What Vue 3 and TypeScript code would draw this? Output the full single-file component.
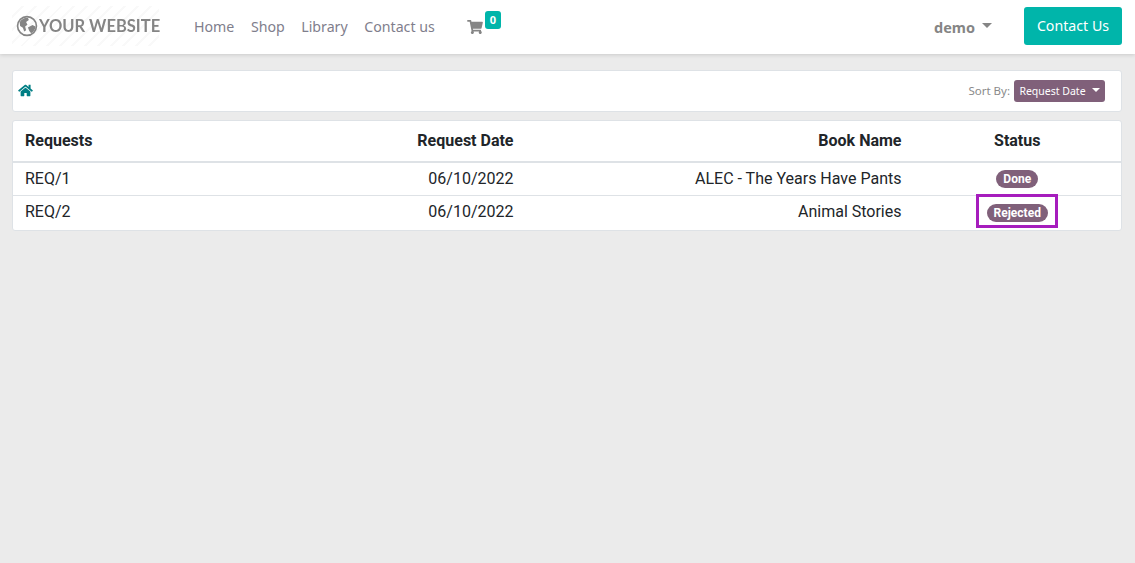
<script setup lang="ts">
interface Row { req: string; date: string; book: string; status: string; marked?: boolean }
const navItems: string[] = ['Home', 'Shop', 'Library', 'Contact us']
const rows: Row[] = [
  { req: 'REQ/1', date: '06/10/2022', book: 'ALEC - The Years Have Pants', status: 'Done' },
  { req: 'REQ/2', date: '06/10/2022', book: 'Animal Stories', status: 'Rejected', marked: true },
]
</script>

<template>
  <div class="page">
    <header class="topbar">
      <div class="logo">
        <svg class="globe" viewBox="0 0 24 24" width="22" height="22">
          <circle cx="12" cy="12" r="10.300" fill="none" stroke="#858585" stroke-width="1.800" />
          <path fill="#858585" d="M4 8c2-4 6-5.500 9-5l1 2.500-3 2 1.500 3-2.500 2 1 4-2 1.500-1.500-4-3-2zM13 13.500l5-2.500 3.200 1.500c0 3-1.700 5.500-4.700 7.500l-2-2.500z" />
        </svg>
        <span class="logo-text">YOUR WEBSITE</span>
      </div>
      <nav class="nav">
        <a v-for="item in navItems" :key="item" class="nav-link">{{ item }}</a>
      </nav>
      <div class="cart">
        <svg viewBox="0 0 576 512" width="16" height="14">
          <path fill="#858585" d="M528 301l47-208c3-15-8-29-23-29H159l-9-45C148 8 138 0 127 0H24C11 0 0 11 0 24v16c0 13 11 24 24 24h70l70 343c-17 10-28 28-28 49 0 31 25 56 56 56s56-25 56-56c0-16-6-30-17-40h210c-11 10-17 24-17 40 0 31 25 56 56 56s56-25 56-56c0-22-13-41-32-50l6-24c3-15-8-29-23-29H218l-6-32h293c11 0 21-8 23-19z" />
        </svg>
        <span class="cart-badge">0</span>
      </div>
      <div class="spacer"></div>
      <div class="user">demo<span class="caret user-caret"></span></div>
      <button class="contact-btn" type="button">Contact Us</button>
    </header>

    <main class="content">
      <section class="card toolbar">
        <svg class="home" viewBox="0 0 576 512" width="15" height="13">
          <path fill="#017e84" d="M280 148 96 300v164c0 9 7 16 16 16l112-1c9 0 16-7 16-16v-95c0-9 7-16 16-16h64c9 0 16 7 16 16v95c0 9 7 16 16 16l112 1c9 0 16-7 16-16V300L296 148c-5-4-11-4-16 0zM572 251l-84-69V44c0-7-5-12-12-12h-56c-7 0-12 5-12 12v72l-89-74c-18-14-44-14-62 0L4 251c-5 4-6 12-2 17l26 31c4 5 12 6 17 2L280 107c5-4 11-4 16 0l235 194c5 4 13 3 17-2l26-31c4-5 3-13-2-17z" />
        </svg>
        <div class="sort">
          <span class="sort-label">Sort By:</span>
          <button class="sort-btn" type="button">Request Date<span class="caret sort-caret"></span></button>
        </div>
      </section>

      <section class="card table-card">
        <table class="table">
          <colgroup>
            <col class="c1" /><col class="c2" /><col class="c3" /><col class="c4" />
          </colgroup>
          <thead>
            <tr>
              <th class="left">Requests</th>
              <th class="right">Request Date</th>
              <th class="right">Book Name</th>
              <th class="center">Status</th>
            </tr>
          </thead>
          <tbody>
            <tr v-for="row in rows" :key="row.req">
              <td class="left">{{ row.req }}</td>
              <td class="right">{{ row.date }}</td>
              <td class="right">{{ row.book }}</td>
              <td class="center status-cell">
                <span class="pill">{{ row.status }}</span>
                <span v-if="row.marked" class="highlight"></span>
              </td>
            </tr>
          </tbody>
        </table>
      </section>
    </main>
  </div>
</template>

<style scoped>
.page {
  width: 1135px;
  height: 563px;
  background: #ebebeb;
  overflow: hidden;
  font-family: Roboto, sans-serif;
  color: #212529;
}
.topbar {
  height: 54px;
  background: #fff;
  box-shadow: 0 1px 4px rgba(0, 0, 0, 0.14);
  display: flex;
  align-items: center;
  padding: 0 13px 0 15px;
  box-sizing: border-box;
  font-family: "Noto Sans", sans-serif;
}
.logo {
  width: 147px;
  height: 40px;
  margin-left: -3px;
  margin-top: -3px;
  padding-left: 4px;
  box-sizing: border-box;
  display: flex;
  align-items: center;
  background: repeating-linear-gradient(135deg, #fff 0 7px, #f9f9f9 7px 9px);
}
.globe {
  flex: none;
  filter: blur(0.3px);
}
.logo-text {
  font-family: Lato, sans-serif;
  font-weight: 700;
  font-size: 16.500px;
  color: #858585;
  margin-left: 1px;
  white-space: nowrap;
  filter: blur(0.3px);
}
.nav {
  display: flex;
  gap: 16.500px;
  margin-left: 35px;
  margin-top: -2px;
}
.nav-link {
  font-size: 14.200px;
  color: #7f7e8c;
}
.cart {
  position: relative;
  margin-left: 32px;
  width: 34px;
  height: 20px;
  display: flex;
  align-items: center;
  margin-top: -1px;
}
.cart-badge {
  position: absolute;
  left: 18px;
  top: -6px;
  width: 16px;
  height: 18px;
  border-radius: 3px;
  background: #00b5aa;
  color: #fff;
  font-size: 11px;
  font-weight: 700;
  display: flex;
  align-items: center;
  justify-content: center;
}
.spacer {
  flex: 1;
}
.user {
  font-size: 14.500px;
  font-weight: 700;
  color: #858585;
  display: flex;
  align-items: center;
  margin-right: 32px;
  margin-top: -1px;
}
.caret {
  display: inline-block;
  width: 0;
  height: 0;
  border-left: 5px solid transparent;
  border-right: 5px solid transparent;
  border-top: 5px solid currentColor;
}
.user-caret {
  margin-left: 7px;
  margin-top: -3px;
}
.contact-btn {
  width: 98px;
  height: 38px;
  margin-top: -2px;
  border: none;
  border-radius: 3px;
  background: #00b5aa;
  color: #fff;
  font-family: "Noto Sans", sans-serif;
  font-size: 14.200px;
  padding: 0 0 2px;
}
.content {
  padding: 16px 13px 0 12px;
  display: flex;
  flex-direction: column;
  gap: 8px;
}
.card {
  background: #fff;
  border: 1px solid #dee2e6;
  border-radius: 3px;
  box-sizing: border-box;
}
.toolbar {
  height: 42px;
  display: flex;
  align-items: center;
  justify-content: space-between;
  padding: 0 16px 2px 5px;
}
.sort {
  display: flex;
  align-items: center;
  gap: 4px;
  font-family: "Noto Sans", sans-serif;
  margin-top: 2px;
}
.sort-label {
  font-size: 11.500px;
  color: #8a8a8a;
  margin-top: -2px;
}
.sort-btn {
  height: 22px;
  width: 91px;
  border: none;
  border-radius: 3px;
  background: #80607a;
  color: #fff;
  font-family: "Noto Sans", sans-serif;
  font-size: 10.500px;
  padding: 0 0 1px;
  display: flex;
  align-items: center;
  justify-content: center;
}
.sort-caret {
  margin-left: 6px;
  margin-top: -2px;
  border-left-width: 4px;
  border-right-width: 4px;
  border-top-width: 4px;
}
.table-card {
  height: 111px;
}
.table {
  width: 100%;
  border-collapse: collapse;
  table-layout: fixed;
  font-size: 16px;
}
.c1 { width: 246px; }
.c2 { width: 266.500px; }
.c3 { width: 388px; }
.c4 { width: 207.500px; }
th {
  font-weight: 700;
  height: 41px;
  padding: 0 12px 2px;
  border-bottom: 2px solid #dee2e6;
  box-sizing: border-box;
}
td {
  height: 33px;
  padding: 0 12px;
  border-bottom: 1px solid #dee2e6;
  box-sizing: border-box;
}
tbody tr:last-child td {
  border-bottom: none;
  height: 35px;
  padding-bottom: 2px;
}
tbody tr:first-child .pill {
  margin-top: -1px;
}
.left { text-align: left; }
.right { text-align: right; }
.center { text-align: center; }
.status-cell {
  position: relative;
}
.pill {
  display: inline-block;
  background: #80607a;
  color: #fff;
  font-size: 12px;
  font-weight: 700;
  line-height: 12px;
  padding: 3px 7px;
  border-radius: 10px;
  vertical-align: middle;
}
.highlight {
  position: absolute;
  left: 62px;
  top: -2px;
  width: 82px;
  height: 34px;
  border: 3px solid #a61dbd;
  box-sizing: border-box;
  pointer-events: none;
}
</style>
